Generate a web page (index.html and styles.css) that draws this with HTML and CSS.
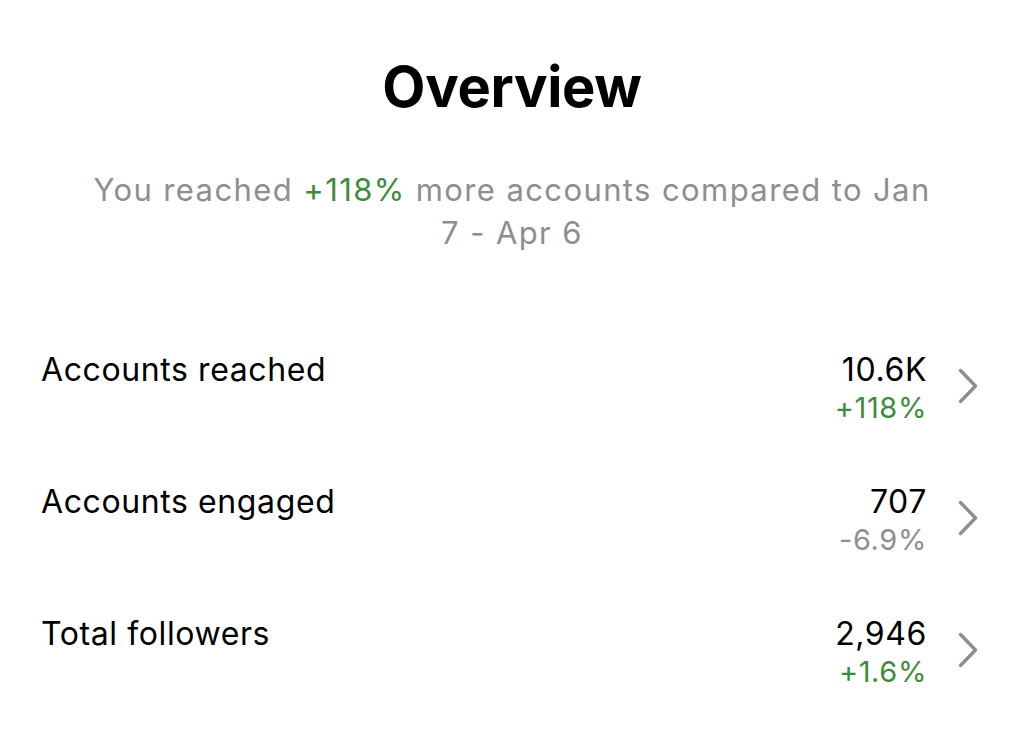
FILE: index.html
```html
<!DOCTYPE html>
<html>
<head>
<meta charset="utf-8">
<link rel="stylesheet" href="styles.css">
</head>
<body>
<main class="overview">
  <h1 class="title">Overview</h1>
  <p class="summary">You reached <span class="up">+118%</span> more accounts compared to Jan 7 - Apr 6</p>
  <ul class="metrics">
    <li class="metric">
      <span class="label">Accounts reached</span>
      <span class="values"><span class="value">10.6K</span><span class="delta up">+118%</span></span>
      <svg class="chevron" viewBox="0 0 22 36" width="22" height="36"><path d="M3.5 2.5 L18.5 18 L3.5 33.5" fill="none" stroke="currentColor" stroke-width="3.4" stroke-linecap="round" stroke-linejoin="round"/></svg>
    </li>
    <li class="metric">
      <span class="label">Accounts engaged</span>
      <span class="values"><span class="value">707</span><span class="delta down">-6.9%</span></span>
      <svg class="chevron" viewBox="0 0 22 36" width="22" height="36"><path d="M3.5 2.5 L18.5 18 L3.5 33.5" fill="none" stroke="currentColor" stroke-width="3.4" stroke-linecap="round" stroke-linejoin="round"/></svg>
    </li>
    <li class="metric">
      <span class="label">Total followers</span>
      <span class="values"><span class="value">2,946</span><span class="delta up">+1.6%</span></span>
      <svg class="chevron" viewBox="0 0 22 36" width="22" height="36"><path d="M3.5 2.5 L18.5 18 L3.5 33.5" fill="none" stroke="currentColor" stroke-width="3.4" stroke-linecap="round" stroke-linejoin="round"/></svg>
    </li>
  </ul>
</main>
</body>
</html>
```
FILE: styles.css
```css
html, body {
  margin: 0;
  padding: 0;
  background: #fff;
}
body {
  font-family: Inter, "Liberation Sans", sans-serif;
  color: #000;
}
.overview {
  padding-top: 53px;
}
.title {
  margin: 0;
  text-align: center;
  font-size: 56px;
  font-weight: 700;
  line-height: 68px;
  letter-spacing: -0.3px;
}
.summary {
  margin: 47px auto 0;
  width: 850px;
  text-align: center;
  font-size: 31px;
  line-height: 43px;
  color: #8e8e8e;
  letter-spacing: 1.4px;
}
.up { color: #3b8c3b; }
.down { color: #8e8e8e; }
.metrics {
  list-style: none;
  margin: 96px 0 0;
  padding: 0 45px 0 41px;
}
.metric {
  display: flex;
  align-items: flex-start;
  height: 132px;
}
.label {
  flex: 1;
  font-size: 32px;
  line-height: 40px;
  letter-spacing: 0.6px;
}
.values {
  display: flex;
  flex-direction: column;
  align-items: flex-end;
}
.value {
  font-size: 32px;
  line-height: 40px;
  letter-spacing: 0.6px;
}
.delta {
  font-size: 29px;
  line-height: 36px;
  letter-spacing: 0.6px;
}
.chevron {
  color: #8e8e8e;
  margin-left: 30px;
  margin-top: 18px;
}
```
